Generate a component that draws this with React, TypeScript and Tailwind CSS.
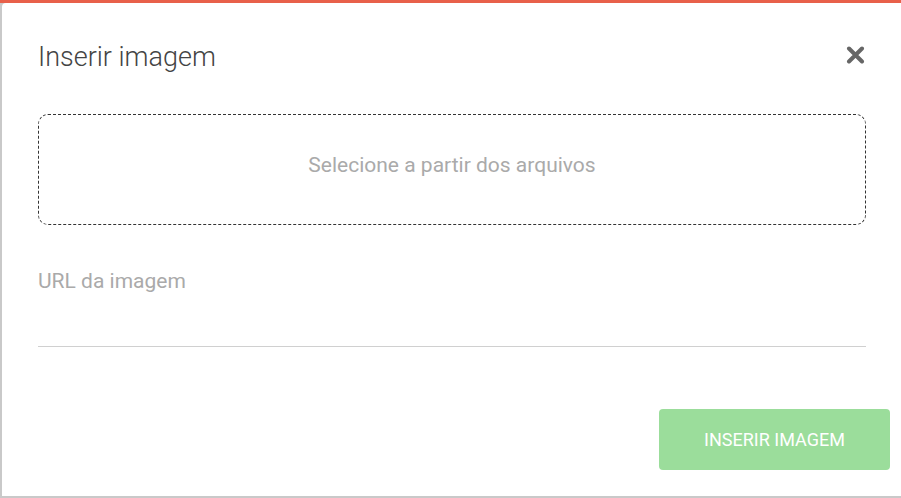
import React from "react";

export default function App() {
  return (
    <div
      className="w-[901px] h-[498px] bg-[#c9c9c9] flex flex-col overflow-hidden"
      style={{ fontFamily: "Roboto, 'Liberation Sans', sans-serif" }}
    >
      <div className="h-[3px] bg-[#e8604a] shrink-0" />
      <div className="ml-[2px] h-[493px] bg-white rounded-tl-[4px] pl-[36px] pr-[35px] flex flex-col">
        {/* header */}
        <div className="pt-[38px] flex justify-between items-start">
          <h1 className="text-[27px] leading-[32px] font-light text-[#444]">
            Inserir imagem
          </h1>
          <button className="mt-[5px] mr-[1px] text-[#666]" aria-label="Fechar">
            <svg width="19" height="18" viewBox="0 0 19 18">
              <path
                d="M3 2.5 L16 15.5 M16 2.5 L3 15.5"
                stroke="currentColor"
                strokeWidth="4"
                strokeLinecap="round"
              />
            </svg>
          </button>
        </div>

        {/* drop zone */}
        <div className="mt-[41px] h-[111px] border border-dashed border-[#333] rounded-[10px] flex items-center justify-center pb-[10px]">
          <span className="text-[21px] leading-[28px] text-[#aaa]">Selecione a partir dos arquivos</span>
        </div>

        {/* url field */}
        <label className="mt-[43px] text-[21px] leading-[26px] text-[#aaa]">URL da imagem</label>
        <div className="h-[53px] border-b border-[#d0d0d0]" />

        {/* footer */}
        <div className="mt-[62px] flex justify-end -mr-[24px]">
          <button className="w-[231px] h-[61px] rounded-[4px] bg-[#9bdd9b] text-white text-[18px]">
            INSERIR IMAGEM
          </button>
        </div>
      </div>
    </div>
  );
}
